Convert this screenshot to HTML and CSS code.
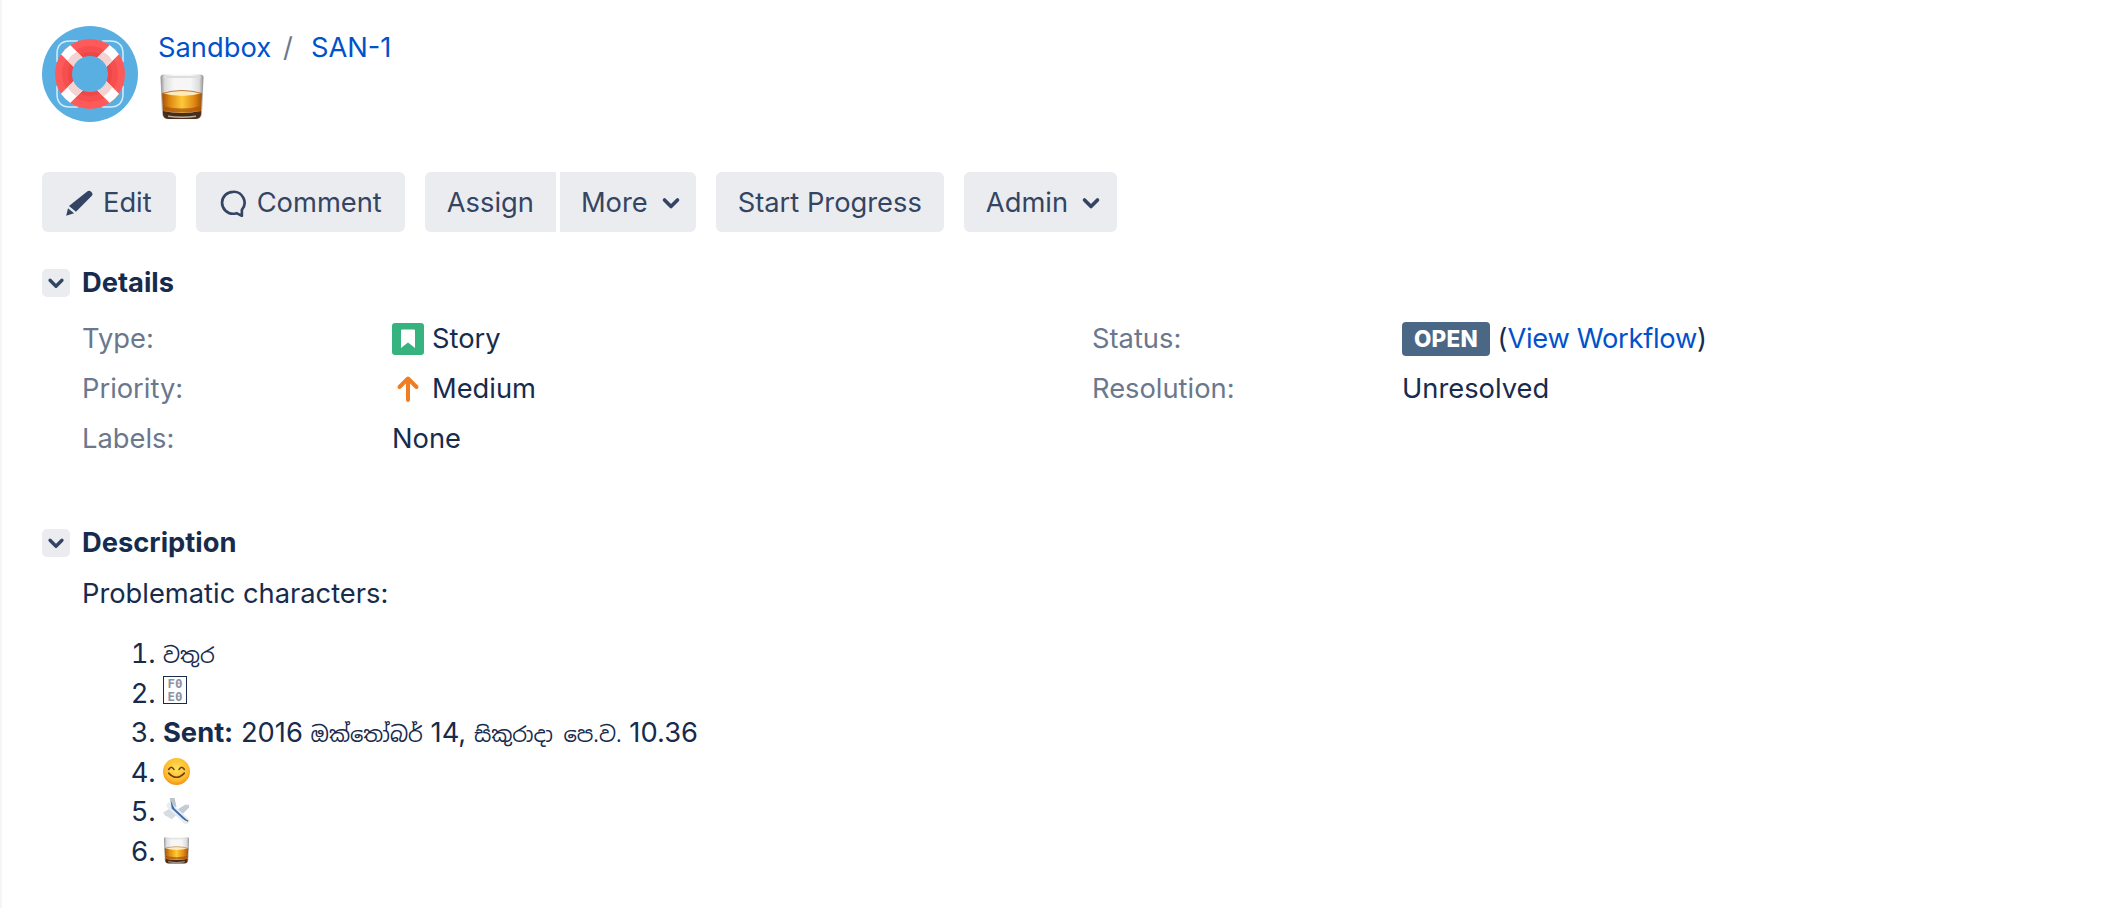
FILE: index.html
```html
<!DOCTYPE html>
<html lang="en">
<head>
<meta charset="utf-8">
<title>SAN-1</title>
<link rel="stylesheet" href="styles.css">
</head>
<body>
<svg class="defs" width="0" height="0" aria-hidden="true">
  <defs>
    <linearGradient id="glassBody" x1="0" y1="0" x2="1" y2="0">
      <stop offset="0" stop-color="#8f8f8f"/><stop offset=".1" stop-color="#dcdcdc"/><stop offset=".3" stop-color="#f6f6f6"/><stop offset=".7" stop-color="#f6f6f6"/><stop offset=".9" stop-color="#dcdcdc"/><stop offset="1" stop-color="#8f8f8f"/>
    </linearGradient>
    <linearGradient id="whisky" x1="0" y1="0" x2="1" y2="0">
      <stop offset="0" stop-color="#a4530a"/><stop offset=".2" stop-color="#e08a12"/><stop offset=".5" stop-color="#fcc93a"/><stop offset=".8" stop-color="#e08a12"/><stop offset="1" stop-color="#a4530a"/>
    </linearGradient>
    <radialGradient id="smileFace" cx=".5" cy=".4" r=".62">
      <stop offset="0" stop-color="#ffe15c"/><stop offset=".7" stop-color="#fdbb2c"/><stop offset="1" stop-color="#f48a12"/>
    </radialGradient>
    <clipPath id="ringOuter"><circle cx="48" cy="48" r="35"/></clipPath>
    <clipPath id="ringInner"><circle cx="48" cy="48" r="26"/></clipPath>
    <symbol id="glass" viewBox="0 0 44 46">
      <path d="M0.5 3 Q0.5 0.5 4 0.5 H40 Q43.5 0.5 43.5 3 L42 39 Q41.5 45.5 35 45.5 H9 Q2.5 45.5 2 39 Z" fill="url(#glassBody)"/>
      <path d="M5 2 H39 Q41 2 41 4 H3 Q3 2 5 2 Z" fill="#dddddd"/>
      <path d="M2 19 Q22 14 42 19 L41 37 Q22 41 3 37 Z" fill="url(#whisky)"/>
      <path d="M2 19 Q22 14.5 42 19 Q22 25 2 19 Z" fill="#fdeab8"/>
      <path d="M2 19.5 Q22 13.5 42 19.5" fill="none" stroke="#a8642a" stroke-width=".8"/>
      <path d="M3 32 Q22 37 41 32 L41 36 Q22 41 3 36 Z" fill="#a9560c" opacity=".75"/>
      <path d="M3 37 Q22 41 41 37 L41 40 Q41 45 35 45 H9 Q3 45 3 40 Z" fill="#4a2c18"/>
      <path d="M8 41.5 Q22 43.5 36 41.5 V43 Q22 45 8 43 Z" fill="#d8d8d8" opacity=".75"/>
    </symbol>
    <symbol id="chev" viewBox="0 0 24 24">
      <path d="M5.5 9 L12 15.5 L18.5 9" fill="none" stroke="currentColor" stroke-width="3.6" stroke-linecap="round" stroke-linejoin="round"/>
    </symbol>
  </defs>
</svg>
<main class="issue">
  <header class="head">
    <svg class="avatar" viewBox="0 0 96 96" role="img" aria-label="Project avatar">
      <circle cx="48" cy="48" r="48" fill="#59afe1"/>
      <g fill="none" stroke="#d6ecf9" stroke-width="1.5">
        <path d="M15 36 V28 Q15 15 28 15 H36"/><path d="M60 15 H68 Q81 15 81 28 V36"/>
        <path d="M81 60 V68 Q81 81 68 81 H60"/><path d="M36 81 H28 Q15 81 15 68 V60"/>
      </g>
      <circle cx="48" cy="48" r="35" fill="#ff5a5a"/>
      <circle cx="48" cy="48" r="28" fill="#f64f4f"/>
      <circle cx="48" cy="48" r="22" fill="#f24545"/>
      <g clip-path="url(#ringOuter)" stroke="#ffffff" stroke-width="13">
        <path d="M15 15 L81 81"/><path d="M81 15 L15 81"/>
      </g>
      <g clip-path="url(#ringInner)" stroke="#f3d2d2" stroke-width="13">
        <path d="M15 15 L81 81"/><path d="M81 15 L15 81"/>
      </g>
      <circle cx="48" cy="48" r="18" fill="#59afe1"/>
    </svg>
    <div class="head-text">
      <nav class="crumbs"><a href="#">Sandbox</a><span class="sep">/</span><a href="#">SAN-1</a></nav>
      <svg class="emoji-title"><use href="#glass"/></svg>
    </div>
  </header>

  <div class="toolbar">
    <a class="btn btn-edit" href="#">
      <svg class="btn-icon" viewBox="0 0 24 24"><path d="M19 2.2 a2.3 2.3 0 0 1 3.2 0 l.6.6 a2.3 2.3 0 0 1 0 3.2 L9.4 19.6 3.4 14.6 Z M2.6 16.4 l5.2 4.4 L1 23 Z" fill="#344563"/></svg>
      Edit
    </a>
    <a class="btn btn-comment" href="#">
      <svg class="btn-icon" viewBox="0 0 24 24"><path d="M12 2.4 a9.4 9.4 0 1 0 0 18.8 q1.6 0 3-.5 L19.6 23 V17.9 A9.4 9.4 0 0 0 12 2.4 Z" fill="none" stroke="#344563" stroke-width="2.3" stroke-linejoin="round"/></svg>
      Comment
    </a>
    <div class="btn-group">
      <a class="btn" href="#">Assign</a>
      <a class="btn btn-more" href="#">More<svg class="chev"><use href="#chev"/></svg></a>
    </div>
    <a class="btn" href="#">Start Progress</a>
    <a class="btn btn-admin" href="#">Admin<svg class="chev"><use href="#chev"/></svg></a>
  </div>

  <section class="details">
    <h2 class="mod-head"><span class="toggle"><svg class="chev-s"><use href="#chev"/></svg></span>Details</h2>
    <dl class="fields">
      <dt>Type:</dt>
      <dd class="with-icon">
        <svg class="type-icon" viewBox="0 0 32 32"><rect width="32" height="32" rx="3" fill="#36b37e"/><path d="M9 7.5 Q9 6.5 10 6.5 H22 Q23 6.5 23 7.5 V25 L16 19.5 L9 25 Z" fill="#ffffff"/></svg>
        Story
      </dd>
      <dt>Status:</dt>
      <dd class="status"><span class="lozenge">Open</span> (<a class="workflow" href="#">View Workflow</a>)</dd>
      <dt>Priority:</dt>
      <dd class="with-icon">
        <svg class="type-icon" viewBox="0 0 32 32"><path d="M16 27 V6 M7.5 14 L16 5.5 L24.5 14" fill="none" stroke="#f07d21" stroke-width="4" stroke-linecap="round" stroke-linejoin="round"/></svg>
        Medium
      </dd>
      <dt>Resolution:</dt>
      <dd>Unresolved</dd>
      <dt>Labels:</dt>
      <dd>None</dd>
    </dl>
  </section>

  <section class="description">
    <h2 class="mod-head"><span class="toggle"><svg class="chev-s"><use href="#chev"/></svg></span>Description</h2>
    <div class="body">
      <p>Problematic characters:</p>
      <ol>
        <li><span class="si">වතුර</span></li>
        <li><span class="nofont">F0<br>E0</span></li>
        <li><b>Sent:</b> 2016 <span class="si">ඔක්තෝබර්</span> 14, <span class="si">සිකුරාදා පෙ.ව.</span> 10.36</li>
        <li>
          <svg class="emoji" viewBox="0 0 26 26"><circle cx="13" cy="13" r="13" fill="url(#smileFace)"/><path d="M5.5 11 Q8 6.8 10.5 11 M15.5 11 Q18 6.8 20.5 11" fill="none" stroke="#6b3f12" stroke-width="1.6" stroke-linecap="round"/><path d="M5.5 14.5 Q13 22.5 20.5 14.5" fill="none" stroke="#6b3f12" stroke-width="1.6" stroke-linecap="round"/></svg>
        </li>
        <li>
          <svg class="emoji" viewBox="0 0 28 26">
            <path d="M7 0 L12 0 L14 9 L9 13 Z" fill="#b9c4cd"/>
            <path d="M0 15 L12 8 L17 15 L9 22 L2 18 Z" fill="#d5dce2"/>
            <path d="M27 7 L23 7 L15 12 L19 18 L27 10 Z" fill="#c2ccd4"/>
            <path d="M7 8 L24 24" stroke="#e9edf0" stroke-width="6.5" stroke-linecap="round"/>
            <path d="M8 3 L12 11 L24 22 L21 22 L9 11 Z" fill="#3d6eb4"/>
            <path d="M22 22 L26 24" stroke="#56626e" stroke-width="1.4"/>
          </svg>
        </li>
        <li><svg class="emoji" viewBox="0 0 44 46"><use href="#glass"/></svg></li>
      </ol>
    </div>
  </section>
</main>
</body>
</html>
```

FILE: styles.css
```css
* { box-sizing: border-box; }

html, body { height: 100%; }

body {
  margin: 0;
  background: #fff;
  color: #172b4d;
  font-family: Inter, "Noto Sans", "Liberation Sans", sans-serif;
  font-size: 27.3px;
  line-height: 40px;
  overflow: hidden;
}

a { color: #0052cc; text-decoration: none; }

.defs { display: block; height: 0; }

.issue {
  min-height: 100%;
  border-left: 2px solid #f4f5f7;
  padding: 26px 40px 0;
}

.head { display: flex; gap: 20px; height: 96px; }

.avatar { width: 96px; height: 96px; flex: none; }

.head-text { display: flex; flex-direction: column; align-items: flex-start; }

.crumbs { height: 45px; padding-top: 2px; display: flex; }

.sep { color: #6b778c; margin: 0 18px 0 12px; }

.emoji-title { width: 44px; height: 46px; margin-left: 2px; margin-top: 3px; }

.toolbar { display: flex; gap: 20px; margin-top: 50px; }

.btn {
  display: flex;
  align-items: center;
  height: 60px;
  padding: 1px 22px 0;
  border-radius: 6px;
  background: #ebecf0;
  color: #344563;
  white-space: nowrap;
}

.btn-icon { width: 28px; height: 28px; margin-right: 10px; margin-left: 1px; }

.btn-edit { padding-right: 24px; }
.btn-comment { padding-right: 23px; }

.btn-group { display: flex; gap: 4px; }

.btn-group .btn:first-child { border-radius: 6px 0 0 6px; }
.btn-group .btn:last-child { border-radius: 0 6px 6px 0; }

.btn-more { padding: 1px 13px 0 21px; }
.btn-admin { padding: 1px 14px 0 22px; }

.chev { width: 24px; height: 24px; margin-left: 11px; color: #344563; }

.details { margin-top: 37px; }
.description { margin-top: 65px; }

.mod-head {
  display: flex;
  align-items: center;
  gap: 12px;
  height: 28px;
  margin: 0;
  font-size: 27.3px;
  font-weight: 700;
}

.toggle {
  display: flex;
  align-items: center;
  justify-content: center;
  width: 28px;
  height: 28px;
  border-radius: 5px;
  background: #ebecf0;
  color: #344563;
}

.chev-s { width: 22px; height: 22px; }

.fields {
  display: grid;
  grid-template-columns: 310px 700px 310px 1fr;
  grid-auto-rows: 50px;
  margin: 17px 0 0 40px;
}

.fields dt, .fields dd { margin: 0; display: flex; align-items: center; }

.fields dt { color: #6b778c; }

.fields dt:nth-of-type(5) { grid-column: 1; }

.with-icon { gap: 8px; }

.type-icon { width: 32px; height: 32px; }

.status { white-space: pre; }

.workflow { letter-spacing: -.3px; }

.lozenge {
  display: inline-flex;
  align-items: center;
  height: 34px;
  padding: 0 12px;
  border-radius: 4px;
  background: #4a6785;
  color: #fff;
  font-size: 22.5px;
  font-weight: 800;
  letter-spacing: .2px;
  text-transform: uppercase;
}

.body { margin-left: 40px; }

.body p { margin: 17px 0 0; }

ol { margin: 20px 0 0; padding: 0 0 0 81px; }

ol li { height: 39.5px; }

.si { font-family: "Noto Sans Sinhala", "Noto Sans", Inter, sans-serif; font-size: 21px; }

.nofont {
  display: inline-block;
  overflow: hidden;
  width: 24px;
  height: 28px;
  border: 1px solid #172b4d;
  color: #8993a4;
  font-family: "DejaVu Sans Mono", monospace;
  font-size: 12.5px;
  font-weight: 700;
  line-height: 13px;
  text-align: center;
  vertical-align: -1px;
}

.emoji { width: 27px; height: 27px; vertical-align: -3px; }
```
